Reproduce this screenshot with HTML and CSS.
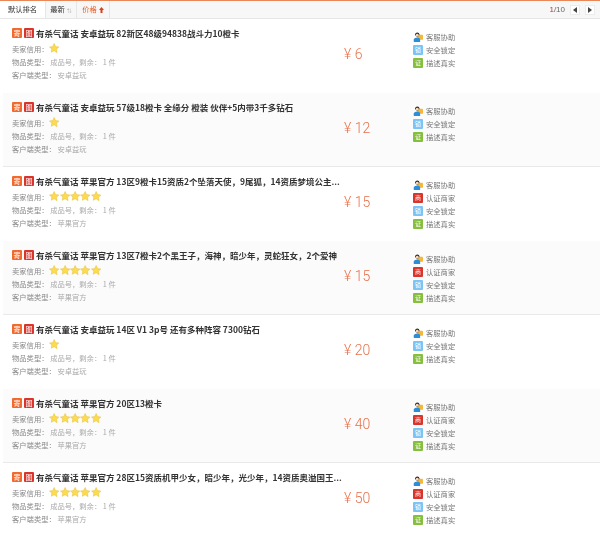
FILE: index.html
```html
<!DOCTYPE html>
<html lang="zh">
<head>
<meta charset="utf-8">
<title>商品列表</title>
<link rel="stylesheet" href="styles.css">
</head>
<body>
<svg class="defs" width="0" height="0" aria-hidden="true">
  <defs>
    <symbol id="star" viewBox="0 0 12 12"><path d="M6 .6l1.7 3.6 3.8.5-2.8 2.7.7 3.9L6 9l-3.4 1.8.7-3.9L.5 4.7l3.8-.5z" fill="#fbdc4f" stroke="#e9bf45" stroke-width=".6"/></symbol>
    <symbol id="kefu" viewBox="0 0 14 14"><rect x="6" y="4" width="8" height="7" rx="1" fill="#f5b73b"/><circle cx="6" cy="3.6" r="3" fill="#2b2b2b"/><circle cx="6" cy="4.4" r="2" fill="#f7d7b8"/><path d="M1 14v-3c0-2 2-3.4 5-3.4s4 1.4 4 3.4v3z" fill="#2a8fd8"/></symbol>
  </defs>
</svg>
<main class="panel">
  <nav class="tabs">
    <div class="tab">默认排名</div>
    <div class="tab tab-new">最新<span class="sort">⇅</span></div>
    <div class="tab tab-on">价格<svg class="arrow" viewBox="0 0 6 7"><path d="M3 0l3 3.4H4.2V7H1.8V3.4H0z" fill="#d9401c"/></svg></div>
    <div class="pager">
      <span><b>1</b>/10</span>
      <button class="page-btn"><i class="tri tri-l"></i></button>
      <button class="page-btn"><i class="tri tri-r"></i></button>
    </div>
  </nav>

  <article class="row">
    <div class="info">
      <h3 class="title"><span class="tag tag-o">寄</span><span class="tag tag-r">图</span>有杀气童话 安卓益玩 82新区48级94838战斗力10橙卡</h3>
      <p class="meta">卖家信用：<span class="stars"><svg class="star"><use href="#star"/></svg></span></p>
      <p class="meta">物品类型： <span class="v">成品号，剩余： 1 件</span></p>
      <p class="meta">客户端类型： <span class="v">安卓益玩</span></p>
    </div>
    <div class="price">¥ 6</div>
    <ul class="badges">
      <li><svg class="bi"><use href="#kefu"/></svg>客服协助</li>
      <li><span class="bi bi-b">锁</span>安全锁定</li>
      <li><span class="bi bi-g">证</span>描述真实</li>
    </ul>
  </article>

  <article class="row">
    <div class="info">
      <h3 class="title"><span class="tag tag-o">寄</span><span class="tag tag-r">图</span>有杀气童话 安卓益玩 57级18橙卡 全缘分 橙装 伙伴+5内带3千多钻石</h3>
      <p class="meta">卖家信用：<span class="stars"><svg class="star"><use href="#star"/></svg></span></p>
      <p class="meta">物品类型： <span class="v">成品号，剩余： 1 件</span></p>
      <p class="meta">客户端类型： <span class="v">安卓益玩</span></p>
    </div>
    <div class="price">¥ 12</div>
    <ul class="badges">
      <li><svg class="bi"><use href="#kefu"/></svg>客服协助</li>
      <li><span class="bi bi-b">锁</span>安全锁定</li>
      <li><span class="bi bi-g">证</span>描述真实</li>
    </ul>
  </article>

  <article class="row">
    <div class="info">
      <h3 class="title"><span class="tag tag-o">寄</span><span class="tag tag-r">图</span>有杀气童话 苹果官方 13区9橙卡15资质2个坠落天使，9尾狐，14资质梦境公主...</h3>
      <p class="meta">卖家信用：<span class="stars"><svg class="star"><use href="#star"/></svg><svg class="star"><use href="#star"/></svg><svg class="star"><use href="#star"/></svg><svg class="star"><use href="#star"/></svg><svg class="star"><use href="#star"/></svg></span></p>
      <p class="meta">物品类型： <span class="v">成品号，剩余： 1 件</span></p>
      <p class="meta">客户端类型： <span class="v">苹果官方</span></p>
    </div>
    <div class="price">¥ 15</div>
    <ul class="badges">
      <li><svg class="bi"><use href="#kefu"/></svg>客服协助</li>
      <li><span class="bi bi-r">商</span>认证商家</li>
      <li><span class="bi bi-b">锁</span>安全锁定</li>
      <li><span class="bi bi-g">证</span>描述真实</li>
    </ul>
  </article>

  <article class="row">
    <div class="info">
      <h3 class="title"><span class="tag tag-o">寄</span><span class="tag tag-r">图</span>有杀气童话 苹果官方 13区7橙卡2个黑王子，海神，暗少年，灵蛇狂女，2个爱神</h3>
      <p class="meta">卖家信用：<span class="stars"><svg class="star"><use href="#star"/></svg><svg class="star"><use href="#star"/></svg><svg class="star"><use href="#star"/></svg><svg class="star"><use href="#star"/></svg><svg class="star"><use href="#star"/></svg></span></p>
      <p class="meta">物品类型： <span class="v">成品号，剩余： 1 件</span></p>
      <p class="meta">客户端类型： <span class="v">苹果官方</span></p>
    </div>
    <div class="price">¥ 15</div>
    <ul class="badges">
      <li><svg class="bi"><use href="#kefu"/></svg>客服协助</li>
      <li><span class="bi bi-r">商</span>认证商家</li>
      <li><span class="bi bi-b">锁</span>安全锁定</li>
      <li><span class="bi bi-g">证</span>描述真实</li>
    </ul>
  </article>

  <article class="row">
    <div class="info">
      <h3 class="title"><span class="tag tag-o">寄</span><span class="tag tag-r">图</span>有杀气童话 安卓益玩 14区 V1 3p号 还有多种阵容 7300钻石</h3>
      <p class="meta">卖家信用：<span class="stars"><svg class="star"><use href="#star"/></svg></span></p>
      <p class="meta">物品类型： <span class="v">成品号，剩余： 1 件</span></p>
      <p class="meta">客户端类型： <span class="v">安卓益玩</span></p>
    </div>
    <div class="price">¥ 20</div>
    <ul class="badges">
      <li><svg class="bi"><use href="#kefu"/></svg>客服协助</li>
      <li><span class="bi bi-b">锁</span>安全锁定</li>
      <li><span class="bi bi-g">证</span>描述真实</li>
    </ul>
  </article>

  <article class="row">
    <div class="info">
      <h3 class="title"><span class="tag tag-o">寄</span><span class="tag tag-r">图</span>有杀气童话 苹果官方 20区13橙卡</h3>
      <p class="meta">卖家信用：<span class="stars"><svg class="star"><use href="#star"/></svg><svg class="star"><use href="#star"/></svg><svg class="star"><use href="#star"/></svg><svg class="star"><use href="#star"/></svg><svg class="star"><use href="#star"/></svg></span></p>
      <p class="meta">物品类型： <span class="v">成品号，剩余： 1 件</span></p>
      <p class="meta">客户端类型： <span class="v">苹果官方</span></p>
    </div>
    <div class="price">¥ 40</div>
    <ul class="badges">
      <li><svg class="bi"><use href="#kefu"/></svg>客服协助</li>
      <li><span class="bi bi-r">商</span>认证商家</li>
      <li><span class="bi bi-b">锁</span>安全锁定</li>
      <li><span class="bi bi-g">证</span>描述真实</li>
    </ul>
  </article>

  <article class="row">
    <div class="info">
      <h3 class="title"><span class="tag tag-o">寄</span><span class="tag tag-r">图</span>有杀气童话 苹果官方 28区15资质机甲少女，暗少年，光少年，14资质奥溢国王...</h3>
      <p class="meta">卖家信用：<span class="stars"><svg class="star"><use href="#star"/></svg><svg class="star"><use href="#star"/></svg><svg class="star"><use href="#star"/></svg><svg class="star"><use href="#star"/></svg><svg class="star"><use href="#star"/></svg></span></p>
      <p class="meta">物品类型： <span class="v">成品号，剩余： 1 件</span></p>
      <p class="meta">客户端类型： <span class="v">苹果官方</span></p>
    </div>
    <div class="price">¥ 50</div>
    <ul class="badges">
      <li><svg class="bi"><use href="#kefu"/></svg>客服协助</li>
      <li><span class="bi bi-r">商</span>认证商家</li>
      <li><span class="bi bi-b">锁</span>安全锁定</li>
      <li><span class="bi bi-g">证</span>描述真实</li>
    </ul>
  </article>
</main>
</body>
</html>
```

FILE: styles.css
```css
* { box-sizing: border-box; }
html, body { margin: 0; padding: 0; }
body { width: 600px; height: 535px; overflow: hidden; background: #fff; font-family: "Noto Sans CJK SC", "Liberation Sans", sans-serif; color: #888; font-size: 8px; }
.defs { display: block; height: 0; }
.panel { border-top: 1px solid #e8875a; filter: blur(.3px); }
.tabs { display: flex; align-items: stretch; height: 18px; background: #f7f7f7; border-bottom: 1px solid #e6e6e6; }
.tab { display: flex; align-items: center; justify-content: center; gap: 2px; width: 33px; background: #f7f7f7; border-right: 1px solid #e6e6e6; color: #333; font-size: 7.3px; line-height: 1; }
.tab:first-child { background: #fff; width: 46px; }
.tab-new { width: 31px; }
.tab-on { color: #e8602c; }
.sort { color: #aaa; font-size: 5px; }
.arrow { display: block; width: 5px; height: 6px; }
.pager { margin-left: auto; display: flex; align-items: center; gap: 5px; padding-right: 5px; color: #666; font-size: 8px; font-family: "Liberation Sans", sans-serif; }
.pager b { color: #c0392b; font-weight: normal; }
.page-btn { width: 10px; height: 10px; padding: 0; margin: 0; display: flex; align-items: center; justify-content: center; background: #fff; border: 1px solid #ececec; }
.tri { width: 0; height: 0; border-top: 3px solid transparent; border-bottom: 3px solid transparent; display: block; }
.tri-l { border-right: 4px solid #444; }
.tri-r { border-left: 4px solid #444; }
.row { display: flex; align-items: stretch; height: 74px; background: #fff; margin-left: 3px; }
.row:nth-of-type(even) { background: #fbfbfb; border-bottom: 1px solid #e9e9e9; }
.info { width: 341px; padding: 7px 0 0 9px; min-width: 0; }
.title { margin: 0 0 2px; display: flex; align-items: center; font-size: 8.5px; line-height: 14px; font-weight: 700; color: #333; white-space: pre; }
.tag { flex: none; width: 10px; height: 10px; margin-right: 2px; display: flex; align-items: center; justify-content: center; color: #fff; font-size: 7px; font-weight: 400; line-height: 1; border-radius: 1px; }
.tag-o { background: #f06a30; }
.tag-r { background: #d8362c; }
.meta { margin: 0; display: flex; align-items: center; height: 13px; font-size: 7.3px; color: #888; white-space: pre; }
.v { color: #aaa; }
.stars { display: flex; margin-left: 1px; }
.star { display: block; width: 10.3px; height: 10.3px; }
.price { width: 69px; padding-top: 27px; font-family: "Roboto", sans-serif; font-weight: 300; font-size: 14px; line-height: 16px; color: #e9714a; white-space: pre; }
.badges { list-style: none; margin: 0; padding: 11px 0 0; display: flex; flex-direction: column; }
.badges li { display: flex; align-items: center; height: 13px; gap: 3px; font-size: 7.3px; color: #777; white-space: nowrap; }
.bi { flex: none; display: flex; align-items: center; justify-content: center; width: 10px; height: 10px; color: #fff; font-size: 6px; line-height: 1; border-radius: 1px; }
.bi-b { background: #7cc4f5; }
.bi-g { background: #86bf3e; }
.bi-r { background: #d8362c; }
```
